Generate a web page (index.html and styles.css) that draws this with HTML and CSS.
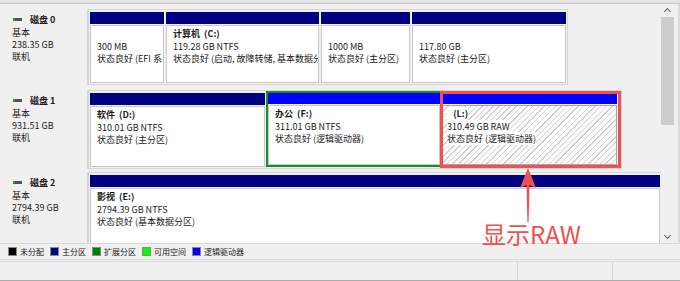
FILE: index.html
```html
<!DOCTYPE html>
<html>
<head>
    <meta charset=utf-8 />
    <link rel="stylesheet" href="styles.css">
</head>
<body>
    <div class="top"></div>

    <div class="main">
      <div class="disks">

        <div class="disk d0">
          <div class="label">
            <div class="title"><span class="icon"></span>磁盘 0</div>
            <div>基本</div>
            <div>238.35 GB</div>
            <div>联机</div>
          </div>
          <div class="parts">
            <div class="part w74"><div class="bar"></div>
              <div class="body tight"><div>&nbsp;</div><div>300 MB</div><div>状态良好 (EFI 系</div></div></div>
            <div class="part w153"><div class="bar"></div>
              <div class="body tight"><div class="name">计算机&nbsp;&nbsp;(C:)</div><div>119.28 GB NTFS</div><div>状态良好 (启动, 故障转储, 基本数据分</div></div></div>
            <div class="part w89"><div class="bar"></div>
              <div class="body"><div>&nbsp;</div><div>1000 MB</div><div>状态良好 (主分区)</div></div></div>
            <div class="part w154"><div class="bar"></div>
              <div class="body"><div>&nbsp;</div><div>117.80 GB</div><div>状态良好 (主分区)</div></div></div>
          </div>
        </div>

        <div class="disk d1">
          <div class="label">
            <div class="title"><span class="icon"></span>磁盘 1</div>
            <div>基本</div>
            <div>931.51 GB</div>
            <div>联机</div>
          </div>
          <div class="parts">
            <div class="part w175"><div class="bar"></div>
              <div class="body"><div class="name">软件&nbsp;&nbsp;(D:)</div><div>310.01 GB NTFS</div><div>状态良好 (主分区)</div></div></div>
            <div class="ext">
              <div class="part w172"><div class="bar logical"></div>
                <div class="body"><div class="name">办公&nbsp;&nbsp;(F:)</div><div>311.01 GB NTFS</div><div>状态良好 (逻辑驱动器)</div></div></div>
              <div class="part w175"><div class="bar logical"></div>
                <div class="body hatch"><div class="name"><span>&nbsp;&nbsp;&nbsp;(L:)</span></div><div><span>310.49 GB RAW</span></div><div><span>状态良好 (逻辑驱动器)</span></div></div></div>
            </div>
          </div>
        </div>

        <div class="disk d2">
          <div class="label">
            <div class="title"><span class="icon"></span>磁盘 2</div>
            <div>基本</div>
            <div>2794.39 GB</div>
            <div>联机</div>
          </div>
          <div class="parts">
            <div class="part w570"><div class="bar"></div>
              <div class="body"><div class="name">影视&nbsp;&nbsp;(E:)</div><div>2794.39 GB NTFS</div><div>状态良好 (基本数据分区)</div></div></div>
          </div>
        </div>

      </div>

      <div class="scroll">
        <span class="arrow up"></span>
        <div class="thumb"></div>
        <span class="arrow down"></span>
      </div>

      <!-- annotation drawn over the view -->
      <div class="mark"></div>
      <svg class="pointer" width="680" height="239">
        <polygon points="528,164 536,184 529.5,181 528.6,218 527.4,218 526.5,181 520,184" />
      </svg>
      <div class="note">显示RAW</div>
    </div>

    <div class="legend">
      <span class="item"><i class="sq black"></i>未分配</span>
      <span class="item"><i class="sq navy"></i>主分区</span>
      <span class="item"><i class="sq green"></i>扩展分区</span>
      <span class="item"><i class="sq lime"></i>可用空间</span>
      <span class="item"><i class="sq blue"></i>逻辑驱动器</span>
    </div>

    <div class="status">
      <span class="cell wide"></span>
      <span class="cell mid"></span>
      <span class="cell"></span>
    </div>
</body>
</html>
```

FILE: styles.css
```css
body {
    margin: 0;
    width: 680px;
    height: 281px;
    overflow: hidden;
    background-color: #f0f0f0;
    color: #1b1b1b;
    font-family: "Noto Sans CJK SC", "Noto Sans", sans-serif;
    font-size: 9px;
}

.top {
    height: 3px;
    background-color: #e4e4e4;
    border-bottom: 1px solid #c6c6c6;
}

.main {
    position: relative;
    display: flex;
    height: 239px;
    border-right: 2px solid #dadada;
}

.disks {
    flex: 1;
    overflow: hidden;
    padding: 5px 0 0 6px;
}

.disk {
    display: flex;
}

.d0 { height: 76px; margin-bottom: 5px; }
.d1 { height: 79px; margin-bottom: 3px; }
.d2 { height: 80px; }

/* disk label on the left */
.label {
    flex: none;
    width: 82px;
    border-right: 1px solid #d6d6d6;
    padding: 5px 0 0 6px;
    box-sizing: border-box;
    line-height: 12px;
}

.title {
    font-weight: bold;
    margin-bottom: 1px;
}

.icon {
    display: inline-block;
    width: 9px;
    height: 3px;
    margin: 0 8px 2px 1px;
    vertical-align: middle;
    background: linear-gradient(to right, #3f8f3f 0 2px, #505050 2px);
}

/* partitions */
.parts {
    display: flex;
    gap: 2px;
    border: 1px solid #d6d6d6;
    padding: 2px 1px 1px 1px;
}

.part {
    display: flex;
    flex-direction: column;
    flex: none;
}

.w74 { width: 74px; }
.w153 { width: 153px; }
.w89 { width: 89px; }
.w154 { width: 154px; }
.w175 { width: 175px; }
.w172 { width: 172px; }
.w570 { width: 570px; }

.bar {
    height: 12px;
    background-color: #000080;
}

.bar.logical {
    height: 11px;
    background-color: #0000ff;
}

.body {
    flex: 1;
    margin-top: 1px;
    padding: 2px 6px;
    overflow: hidden;
    white-space: nowrap;
    line-height: 12.5px;
    background-color: #fff;
    border: 1px solid #c9c9c9;
}

.body.tight {
    padding-right: 0;
}

.name {
    font-weight: bold;
}

.hatch {
    padding-left: 4px;
    background: repeating-linear-gradient(-45deg, #fff 0 3px, #cfcfcf 3px 4px);
    border-color: #a8a8a8;
}

.hatch span {
    background-color: #fff;
}

.ext {
    display: flex;
    gap: 2px;
    margin: -2px 0 0 -1px;
    padding-right: 1px;
    border: 2px solid #1f8a1f;
}

/* scrollbar */
.scroll {
    position: relative;
    width: 15px;
    padding: 13px 2px 0 0;
}

.thumb {
    height: 108px;
    margin-right: 2px;
    background-color: #cdcdcd;
}

.arrow {
    position: absolute;
    left: 4px;
    width: 4px;
    height: 4px;
    border: solid #606060;
    border-width: 1.5px 0 0 1.5px;
}

.arrow.up {
    top: 5px;
    transform: rotate(45deg);
}

.arrow.down {
    bottom: 5px;
    transform: rotate(225deg);
}

/* red annotation */
.mark {
    position: absolute;
    left: 440px;
    top: 87px;
    width: 181px;
    height: 77px;
    box-sizing: border-box;
    border: 3px solid #f0504e;
}

.pointer {
    position: absolute;
    left: 0;
    top: 0;
}

.pointer polygon {
    fill: #f0504e;
}

.note {
    position: absolute;
    left: 482px;
    top: 217px;
    color: #f0504e;
    font-size: 24px;
    line-height: 26px;
}

/* legend and status bar */
.legend {
    display: flex;
    align-items: center;
    height: 15px;
    padding-left: 8px;
    border-top: 1px solid #d9d9d9;
    border-bottom: 1px solid #d9d9d9;
    font-size: 8px;
}

.item {
    display: flex;
    align-items: center;
    margin-right: 6px;
}

.sq {
    width: 7px;
    height: 7px;
    margin-right: 3px;
    border: 1px solid #8a8a8a;
}

.black { background-color: #000; }
.navy { background-color: #000080; }
.green { background-color: #008000; }
.lime { background-color: #00ff00; }
.blue { background-color: #0000ff; }

.status {
    display: flex;
    height: 18px;
    margin-top: 1px;
    border-top: 1px solid #dcdcdc;
    border-bottom: 2px solid #ababab;
}

.cell {
    flex: 1;
}

.cell.wide {
    flex: none;
    width: 517px;
    border-right: 1px solid #d6d6d6;
}

.cell.mid {
    flex: none;
    width: 94px;
    border-right: 1px solid #d6d6d6;
}
```
